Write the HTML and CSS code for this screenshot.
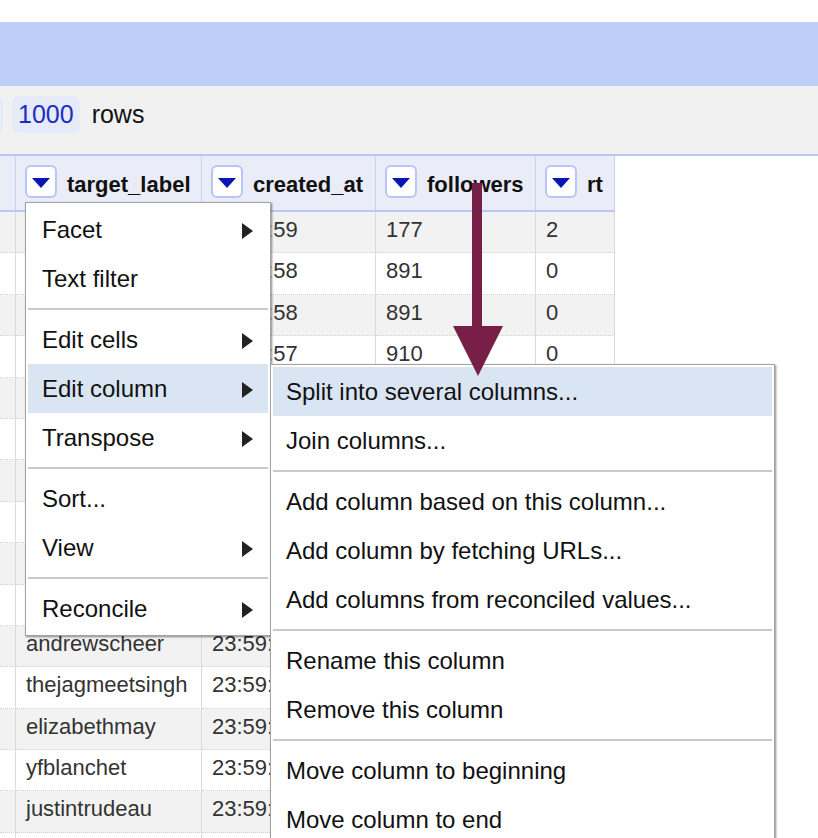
FILE: index.html
```html
<!DOCTYPE html>
<html>
<head>
<meta charset="utf-8">
<title>OpenRefine column menu</title>
<link rel="stylesheet" href="styles.css">
</head>
<body>
<div class="top-gap"></div>
<div class="banner"></div>
<div class="toolbar">
  <span class="pill pill-prev">500</span>
  <span class="pill">1000</span>
  <span class="rows-label">rows</span>
</div>

<div class="data">
  <div class="hrow">
    <div class="hcell"></div>
    <div class="hcell"><span class="dd"><i class="dd-tri"></i></span><span class="hname">target_label</span></div>
    <div class="hcell"><span class="dd"><i class="dd-tri"></i></span><span class="hname">created_at</span></div>
    <div class="hcell"><span class="dd"><i class="dd-tri"></i></span><span class="hname">followers</span></div>
    <div class="hcell"><span class="dd"><i class="dd-tri"></i></span><span class="hname">rt</span></div>
  </div>
  <div class="row odd"><div></div><div>justintrudeau</div><div>23:59:59</div><div>177</div><div>2</div></div>
  <div class="row"><div></div><div>andrewscheer</div><div>23:59:58</div><div>891</div><div>0</div></div>
  <div class="row odd"><div></div><div>andrewscheer</div><div>23:59:58</div><div>891</div><div>0</div></div>
  <div class="row"><div></div><div>justintrudeau</div><div>23:59:57</div><div>910</div><div>0</div></div>
  <div class="row odd"><div></div><div>elizabethmay</div><div>23:59:57</div><div>402</div><div>0</div></div>
  <div class="row"><div></div><div>yfblanchet</div><div>23:59:57</div><div>128</div><div>1</div></div>
  <div class="row odd"><div></div><div>thejagmeetsingh</div><div>23:59:56</div><div>655</div><div>0</div></div>
  <div class="row"><div></div><div>justintrudeau</div><div>23:59:56</div><div>233</div><div>0</div></div>
  <div class="row odd"><div></div><div>andrewscheer</div><div>23:59:55</div><div>79</div><div>0</div></div>
  <div class="row"><div></div><div>justintrudeau</div><div>23:59:55</div><div>1204</div><div>3</div></div>
  <div class="row odd"><div></div><div>andrewscheer</div><div>23:59:54</div><div>318</div><div>0</div></div>
  <div class="row"><div></div><div>thejagmeetsingh</div><div>23:59:54</div><div>540</div><div>0</div></div>
  <div class="row odd"><div></div><div>elizabethmay</div><div>23:59:53</div><div>96</div><div>0</div></div>
  <div class="row"><div></div><div>yfblanchet</div><div>23:59:53</div><div>2210</div><div>1</div></div>
  <div class="row odd"><div></div><div>justintrudeau</div><div>23:59:52</div><div>47</div><div>0</div></div>
  <div class="row"><div></div><div>andrewscheer</div><div>23:59:52</div><div>61</div><div>0</div></div>
</div>

<div class="menu main-menu">
  <div class="mi">Facet<i class="sub-tri"></i></div>
  <div class="mi">Text filter</div>
  <div class="sep"></div>
  <div class="mi">Edit cells<i class="sub-tri"></i></div>
  <div class="mi active">Edit column<i class="sub-tri"></i></div>
  <div class="mi">Transpose<i class="sub-tri"></i></div>
  <div class="sep"></div>
  <div class="mi">Sort...</div>
  <div class="mi">View<i class="sub-tri"></i></div>
  <div class="sep"></div>
  <div class="mi">Reconcile<i class="sub-tri"></i></div>
</div>

<div class="menu sub-menu">
  <div class="mi active">Split into several columns...</div>
  <div class="mi">Join columns...</div>
  <div class="sep"></div>
  <div class="mi">Add column based on this column...</div>
  <div class="mi">Add column by fetching URLs...</div>
  <div class="mi">Add columns from reconciled values...</div>
  <div class="sep"></div>
  <div class="mi">Rename this column</div>
  <div class="mi">Remove this column</div>
  <div class="sep"></div>
  <div class="mi">Move column to beginning</div>
  <div class="mi">Move column to end</div>
</div>

<svg class="arrow" width="50" height="194" viewBox="0 0 50 194" xmlns="http://www.w3.org/2000/svg">
  <rect x="19" y="0" width="10" height="146" fill="#781f47"/>
  <polygon points="0,143 50,143 25,193" fill="#781f47"/>
</svg>
</body>
</html>
```

FILE: styles.css
```css
html, body {
  margin: 0;
  padding: 0;
  overflow: hidden;
}

body {
  width: 818px;
  height: 838px;
  position: relative;
  background: #ffffff;
  font-family: "Liberation Sans", Arial, Helvetica, sans-serif;
  color: #111;
}

.top-gap {
  height: 22px;
}

.banner {
  height: 64px;
  background: #bfcdf9;
}

.toolbar {
  box-sizing: border-box;
  height: 70px;
  background: #f1f1f1;
  border-bottom: 2px solid #b9c7f6;
  display: flex;
  align-items: flex-start;
  gap: 9px;
  padding-top: 10px;
}

.pill {
  height: 37px;
  padding: 0 6px;
  border-radius: 7px;
  background: #e7eaf8;
  color: #1a2dc4;
  font-size: 25px;
  line-height: 37px;
  white-space: nowrap;
}

.pill-prev {
  box-sizing: border-box;
  width: 40px;
  margin-left: -37px;
  overflow: hidden;
  color: transparent;
}

.rows-label {
  font-size: 25px;
  line-height: 37px;
  color: #111;
  margin-left: 3px;
}

/* data grid */
.hrow,
.row {
  display: grid;
  grid-template-columns: 16px 186px 174px 160px 79px;
  width: 615px;
}

.hrow {
  box-sizing: border-box;
  height: 56px;
  background: #eaedf8;
  border-bottom: 2px solid #b9c7f6;
}

.hcell {
  box-sizing: border-box;
  border-right: 1px solid #c8d2f6;
  display: flex;
  align-items: flex-start;
  gap: 10px;
  padding: 9px 0 0 9px;
  overflow: hidden;
  white-space: nowrap;
}

.dd {
  box-sizing: border-box;
  flex: 0 0 auto;
  width: 32px;
  height: 33px;
  border: 2px solid #b8c6f5;
  border-radius: 6px;
  background: #ffffff;
  display: flex;
  align-items: center;
  justify-content: center;
}

.dd-tri {
  display: block;
  width: 0;
  height: 0;
  margin-top: 3px;
  border-top: 10px solid #0a16b6;
  border-left: 9px solid transparent;
  border-right: 9px solid transparent;
}

.hname {
  font-size: 22px;
  font-weight: bold;
  line-height: 33px;
  margin-top: 3px;
  color: #111;
}

.row {
  height: 41.4px;
}

.row > div {
  box-sizing: border-box;
  border-right: 1px solid #dadada;
  border-bottom: 1px dotted #d4d4d4;
  padding-left: 10px;
  font-size: 22px;
  line-height: 36px;
  color: #333;
  white-space: nowrap;
  overflow: hidden;
}

.row.odd {
  background: #f2f2f2;
}

/* menus */
.menu {
  position: absolute;
  box-sizing: border-box;
  background: #ffffff;
  border: 1px solid #a3a3a3;
  box-shadow: 1px 1px 2px rgba(0, 0, 0, 0.45);
  padding: 2px;
  z-index: 3;
}

.main-menu {
  left: 25px;
  top: 202px;
  width: 246px;
}

.sub-menu {
  left: 270px;
  top: 364px;
  width: 505px;
  z-index: 4;
}

.mi {
  height: 49px;
  display: flex;
  align-items: center;
  justify-content: space-between;
  padding: 0 15px 0 14px;
  font-size: 24px;
  color: #111;
  white-space: nowrap;
}

.sub-menu .mi {
  padding-left: 13px;
}

.mi.active {
  background: #dae5f4;
}

.sub-tri {
  display: block;
  width: 0;
  height: 0;
  margin-top: 3px;
  border-left: 11px solid #222;
  border-top: 8px solid transparent;
  border-bottom: 8px solid transparent;
}

.sep {
  height: 2px;
  margin: 5px 0;
  background: #cacaca;
}

.arrow {
  position: absolute;
  left: 453px;
  top: 183px;
  z-index: 6;
}
```
